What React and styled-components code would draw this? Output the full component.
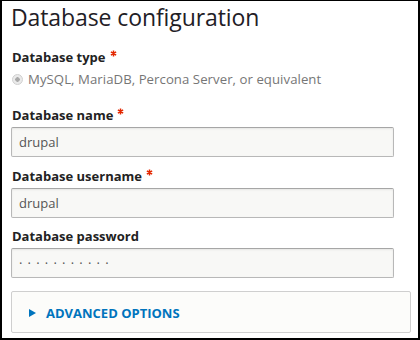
import React from 'react';
import styled, { createGlobalStyle } from 'styled-components';

const Global = createGlobalStyle`
  html, body { margin: 0; padding: 0; background: #fff; }
  body { font-family: "Open Sans", "Noto Sans", sans-serif; }
`;

const Frame = styled.div`
  box-sizing: border-box;
  width: 420px;
  height: 340px;
  border: 2px solid #000;
  border-top-width: 1px;
  background: #fff;
  padding: 0 0 0 9px;
  overflow: hidden;
  display: flex;
  flex-direction: column;
`;

const Title = styled.h2`
  margin: 2px 0 0;
  font-size: 23px;
  line-height: 28px;
  font-weight: 500;
  letter-spacing: -0.1px;
  color: #1f2026;
`;

const Item = styled.div`
  display: flex;
  flex-direction: column;
  margin-top: ${(p) => p.$gap}px;
`;

const Label = styled.div`
  font-size: 13px;
  line-height: 18px;
  font-weight: 700;
  color: #222;
  padding-left: 1px;
  display: flex;
  align-items: flex-start;
`;

const Req = styled.svg`
  width: 7px;
  height: 7px;
  margin: 2px 0 0 4px;
`;

const RadioRow = styled.div`
  display: flex;
  align-items: center;
  margin-top: 4px;
  font-size: 13.2px;
  letter-spacing: 0.05px;
  line-height: 18px;
  color: #767676;
  padding-left: 1px;
`;

const Radio = styled.span`
  box-sizing: border-box;
  width: 11px;
  height: 11px;
  border-radius: 50%;
  border: 1px solid #d0d0d0;
  background: radial-gradient(circle, #a9a9a9 0 2px, #eaeaea 2.5px);
  margin-right: 5px;
  margin-top: 1px;
`;

const Input = styled.div`
  box-sizing: border-box;
  width: 383px;
  height: 30px;
  margin-top: 3px;
  border: 1px solid #b8b8b8;
  border-top-color: #a6a6a6;
  border-radius: 2px;
  background: #f8f8f6;
  box-shadow: inset 0 1px 2px rgba(0, 0, 0, 0.08);
  padding: 0 7px;
  display: flex;
  align-items: center;
  font-size: 13px;
  color: #555;
  letter-spacing: ${(p) => (p.$masked ? '5.2px' : 'normal')};
`;

const Details = styled.div`
  box-sizing: border-box;
  width: 400px;
  height: 42px;
  margin-top: 13px;
  border: 1px solid #cfcfcf;
  border-radius: 2px;
  background: #fcfcfa;
  display: flex;
  align-items: center;
  padding-left: 17px;
`;

const Summary = styled.div`
  display: flex;
  align-items: center;
  gap: 10px;
  color: #0074bd;
  font-size: 13px;
  font-weight: 700;
  text-transform: uppercase;
  line-height: 18px;
  margin-top: 1px;
`;

const Arrow = styled.svg`
  width: 7px;
  height: 8px;
`;

const Asterisk = () => (
  <Req viewBox="0 0 8 8">
    <path
      d="M4 0.5v7M1 2.2l6 3.6M7 2.2l-6 3.6"
      stroke="#e32700"
      strokeWidth="1.7"
      strokeLinecap="butt"
    />
  </Req>
);

const fields = [
  { label: 'Database name', required: true, value: 'drupal', gap: 18 },
  { label: 'Database username', required: true, value: 'drupal', gap: 10 },
  { label: 'Database password', required: false, value: '···········', masked: true, gap: 9 },
];

export default function App() {
  return (
    <>
      <Global />
      <Frame>
        <Title>Database configuration</Title>
        <Item $gap={17}>
          <Label>
            Database type <Asterisk />
          </Label>
          <RadioRow>
            <Radio />
            MySQL, MariaDB, Percona Server, or equivalent
          </RadioRow>
        </Item>
        {fields.map((f) => (
          <Item key={f.label} $gap={f.gap}>
            <Label>
              {f.label}
              {f.required && <Asterisk />}
            </Label>
            <Input $masked={f.masked}>{f.value}</Input>
          </Item>
        ))}
        <Details>
          <Summary>
            <Arrow viewBox="0 0 7 8">
              <path d="M0 0L7 4L0 8Z" fill="#0074bd" />
            </Arrow>
            Advanced options
          </Summary>
        </Details>
      </Frame>
    </>
  );
}
